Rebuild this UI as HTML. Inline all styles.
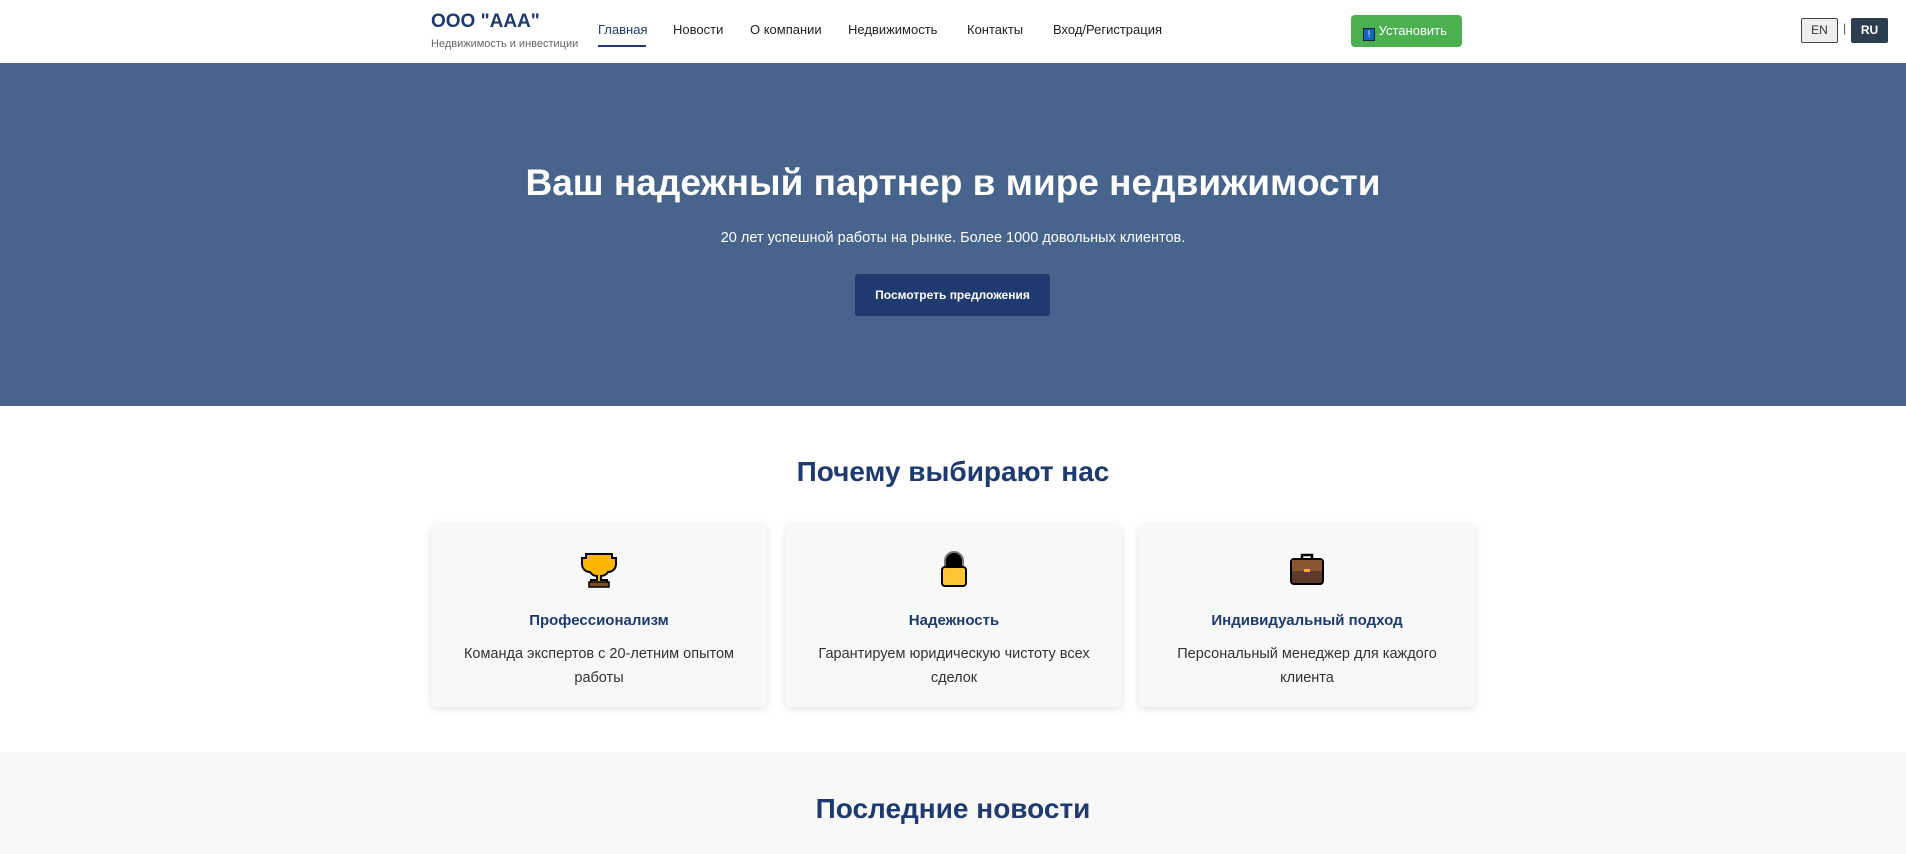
<!DOCTYPE html>
<html><head><meta charset="utf-8"><style>
*{margin:0;padding:0;box-sizing:border-box}
body{width:1906px;height:854px;overflow:hidden;font-family:"Liberation Sans","Noto Sans CJK SC",sans-serif;background:#fff;position:relative}
.a{position:absolute;white-space:nowrap}
header{position:absolute;left:0;top:0;width:1906px;height:63px;background:#fff}
.logo{left:431px;top:11px;font-size:19px;font-weight:bold;color:#1e3a6e}
.sub{left:431px;top:38px;font-size:11px;color:#666}
.nav{top:22px;font-size:13px;color:#222}
.hero{position:absolute;left:0;top:63px;width:1906px;height:343px;background:#46648c}
h1{position:absolute;left:0;width:1906px;top:162px;text-align:center;color:#fff;font-size:37px;font-weight:bold}
.hs{left:0;width:1906px;text-align:center;top:230px;color:#fff;font-size:14.5px}
.btn{left:855px;top:274px;width:195px;height:42px;background:#1e3a6e;border-radius:3px;color:#fff;font-size:12px;font-weight:bold;text-align:center;line-height:42px}
h2{position:absolute;left:0;width:1906px;text-align:center;color:#1e3a6e;font-size:28px;font-weight:bold}
.card{position:absolute;top:524px;width:336px;height:183px;background:#f7f8fa;border-radius:6px;box-shadow:0 2px 8px rgba(0,0,0,.12);text-align:center}
.card svg{position:absolute;left:150px;top:26px}
.card .t{position:absolute;top:88px;width:100%;font-size:15px;font-weight:bold;color:#1e3a6e}
.card .d{position:absolute;top:118px;left:15px;right:15px;font-size:14.5px;line-height:24px;color:#333}
</style></head><body>
<header>
<div class="a logo">ООО "ААА"</div>
<div class="a sub">Недвижимость и инвестиции</div>
<div class="a nav" style="left:598px;color:#1e3a6e">Главная</div>
<div class="a" style="left:598px;top:45px;width:48px;height:2px;background:#1e3a6e"></div>
<div class="a nav" style="left:673px">Новости</div>
<div class="a nav" style="left:750px">О компании</div>
<div class="a nav" style="left:848px">Недвижимость</div>
<div class="a nav" style="left:967px">Контакты</div>
<div class="a nav" style="left:1053px">Вход/Регистрация</div>
<div class="a" style="left:1351px;top:15px;width:111px;height:32px;background:#4caf50;border-radius:4px;color:#fff;font-size:13px;line-height:32px;padding-left:12px"><span style="display:inline-block;width:12px;height:13px;background:#1565c0;border:1px solid #123;vertical-align:-2px;color:#fff;font-size:9px;line-height:11px;text-align:center">!</span> Установить</div>
<div class="a" style="left:1801px;top:18px;width:37px;height:25px;border:1px solid #444;border-radius:2px;background:#eee;font-size:12px;text-align:center;line-height:23px;color:#333">EN</div>
<div class="a" style="left:1843px;top:21px;font-size:12px;color:#555">|</div>
<div class="a" style="left:1851px;top:18px;width:37px;height:25px;border-radius:2px;background:#2c3e50;font-size:12px;text-align:center;line-height:25px;color:#fff;font-weight:bold">RU</div>
</header>
<div class="hero"></div>
<h1>Ваш надежный партнер в мире недвижимости</h1>
<div class="a hs">20 лет успешной работы на рынке. Более 1000 довольных клиентов.</div>
<div class="a btn">Посмотреть предложения</div>
<h2 style="top:456px">Почему выбирают нас</h2>
<div class="card" style="left:431px">
<svg width="36" height="38" viewBox="0 0 36 38"><path d="M5 4h26v4h4v6c0 5-4 8-8 8-2 3-5 4-7 4v4h6v4H10v-4h6v-4c-2 0-5-1-7-4-4 0-8-3-8-8V8h4z" fill="#fbb700" stroke="#000" stroke-width="2"/><rect x="8" y="32" width="20" height="5" fill="#7a4a20" stroke="#000" stroke-width="1.5"/></svg>
<div class="t">Профессионализм</div><div class="d">Команда экспертов с 20-летним опытом работы</div></div>
<div class="card" style="left:786px">
<svg width="36" height="38" viewBox="0 0 36 38"><path d="M9 18V11a9 9 0 0 1 18 0v7" fill="#000" stroke="#777" stroke-width="2"/><rect x="6" y="17" width="24" height="19" rx="3" fill="#fcc436" stroke="#000" stroke-width="2"/></svg>
<div class="t">Надежность</div><div class="d">Гарантируем юридическую чистоту всех сделок</div></div>
<div class="card" style="left:1139px">
<svg width="36" height="38" viewBox="0 0 36 38"><path d="M13 10V5h10v5" fill="none" stroke="#000" stroke-width="2.5"/><rect x="2" y="9" width="32" height="25" rx="3" fill="#603a28" stroke="#000" stroke-width="2"/><rect x="3" y="10" width="30" height="11" fill="#8b5530"/><rect x="15" y="19" width="6" height="3" fill="#fbb700"/></svg>
<div class="t">Индивидуальный подход</div><div class="d">Персональный менеджер для каждого клиента</div></div>
<div class="a" style="left:0;top:752px;width:1906px;height:102px;background:#f8f8f8"></div>
<h2 style="top:793px">Последние новости</h2>
</body></html>
